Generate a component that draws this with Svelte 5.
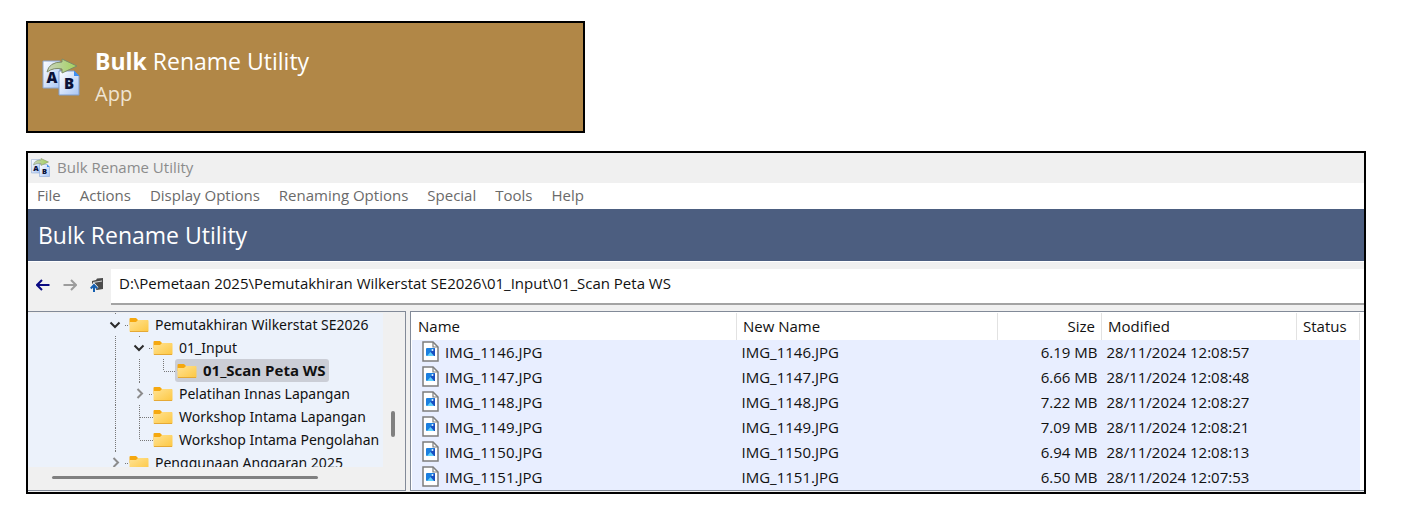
<script>
  const menus = ['File', 'Actions', 'Display Options', 'Renaming Options', 'Special', 'Tools', 'Help'];

  const tree = [
    { name: 'Pemutakhiran Wilkerstat SE2026', guides: [], node: 'open' },
    { name: '01_Input', guides: ['line'], node: 'open' },
    { name: '01_Scan Peta WS', guides: ['line', 'line'], node: 'end', selected: true },
    { name: 'Pelatihan Innas Lapangan', guides: ['line'], node: 'closed' },
    { name: 'Workshop Intama Lapangan', guides: ['line'], node: 'tee' },
    { name: 'Workshop Intama Pengolahan', guides: ['line'], node: 'end' },
    { name: 'Penggunaan Anggaran 2025', guides: [], node: 'closed' }
  ];

  const files = [
    { name: 'IMG_1146.JPG', size: '6.19 MB', modified: '28/11/2024 12:08:57' },
    { name: 'IMG_1147.JPG', size: '6.66 MB', modified: '28/11/2024 12:08:48' },
    { name: 'IMG_1148.JPG', size: '7.22 MB', modified: '28/11/2024 12:08:27' },
    { name: 'IMG_1149.JPG', size: '7.09 MB', modified: '28/11/2024 12:08:21' },
    { name: 'IMG_1150.JPG', size: '6.94 MB', modified: '28/11/2024 12:08:13' },
    { name: 'IMG_1151.JPG', size: '6.50 MB', modified: '28/11/2024 12:07:53' }
  ];

  let path = $state('D:\\Pemetaan 2025\\Pemutakhiran Wilkerstat SE2026\\01_Input\\01_Scan Peta WS');
</script>

{#snippet logo(size)}
  <svg class="logo" width={size} height={size} viewBox="0 0 38 38" aria-hidden="true">
    <defs>
      <linearGradient id="page{size}" x1="0" y1="0" x2="1" y2="1">
        <stop offset="0" stop-color="#ffffff" />
        <stop offset="1" stop-color="#a9c6f5" />
      </linearGradient>
      <linearGradient id="arrow{size}" x1="0" y1="0" x2="1" y2="0">
        <stop offset="0" stop-color="#c9d3c0" />
        <stop offset="1" stop-color="#a3d25a" />
      </linearGradient>
    </defs>
    <path d="M1 3H18V30H1Z" fill="url(#page{size})" stroke="#8aa5cf" />
    <path d="M17 13H32L37 18V37H17Z" fill="url(#page{size})" stroke="#7f9fd2" />
    <path d="M32 12.500V18H37.500Z" fill="#3f8ff0" />
    <text x="10" y="25" text-anchor="middle">A</text>
    <text x="27" y="31" text-anchor="middle">B</text>
    <path d="M5 14Q7 4 20 4V1L35 8L20 15V11Q12 9 5 14Z" fill="url(#arrow{size})" stroke="#7d8a66" />
  </svg>
{/snippet}

{#snippet folder()}
  <svg class="folder" width="20" height="16" viewBox="0 0 20 16" aria-hidden="true">
    <defs>
      <linearGradient id="fold" x1="0" y1="0" x2="1" y2="1">
        <stop offset="0" stop-color="#ffe394" />
        <stop offset="1" stop-color="#fdc741" />
      </linearGradient>
    </defs>
    <path d="M.5 2Q.5 1 1.500 1H7L9 3H19V8H.5Z" fill="#f5a80f" />
    <path d="M.5 5H7L9 3H18.500Q19.500 3 19.500 4V14Q19.500 15 18.500 15H1.500Q.5 15 .5 14Z" fill="url(#fold)" />
    <path d="M1 14.500H19" stroke="#e5a935" />
  </svg>
{/snippet}

{#snippet guide(kind)}
  <svg class="guide" width="24" height="23" viewBox="0 0 24 23" aria-hidden="true">
    {#if kind === 'line'}
      <path d="M12.500 0V23" />
    {:else if kind === 'tee'}
      <path d="M12.500 0V23M13 12.500H26" />
    {:else}
      <path d="M12.500 0V12M13 12.500H26" />
    {/if}
  </svg>
{/snippet}

<main>
  <a class="result" href="#app-window">
    {@render logo(38)}
    <span class="result-text">
      <span class="result-title"><b>Bulk</b> Rename Utility</span>
      <span class="result-kind">App</span>
    </span>
  </a>

  <section class="window" id="app-window" aria-label="Bulk Rename Utility">
    <header class="titlebar">
      {@render logo(19)}
      <span>Bulk Rename Utility</span>
    </header>

    <nav class="menubar">
      {#each menus as item}
        <button type="button">{item}</button>
      {/each}
    </nav>

    <h1>Bulk Rename Utility</h1>

    <div class="toolbar">
      <div class="nav-buttons">
        <button type="button" aria-label="Back">
          <svg width="14" height="14" viewBox="0 0 14 14"><path d="M1 7H13.500M6 2L1 7L6 12" fill="none" stroke="#0a0a82" stroke-width="2" /></svg>
        </button>
        <button type="button" aria-label="Forward">
          <svg width="14" height="14" viewBox="0 0 14 14"><path d="M.5 7H13M8 2L13 7L8 12" fill="none" stroke="#9c9c9c" stroke-width="2" /></svg>
        </button>
        <button type="button" aria-label="Up one folder">
          <svg width="14" height="14" viewBox="0 0 14 14">
            <path d="M2 3L6 2L7 .5L13 0V11L7 12H6V7L4 4.500L2 6Z" fill="#4b4b4b" />
            <path d="M3 4.500L12 3" stroke="#d8d8d8" />
            <path d="M4 14V8M.8 10.500L4 7L7.200 10.500" fill="none" stroke="#f0f0f0" stroke-width="3.500" />
            <path d="M4 14V8M.8 10.500L4 7L7.200 10.500" fill="none" stroke="#155fb0" stroke-width="2" />
          </svg>
        </button>
      </div>
      <input type="text" aria-label="Folder path" bind:value={path} />
    </div>

    <div class="panes">
      <div class="tree-pane">
        <ul role="tree" aria-label="Folders">
          {#each tree as row}
            <li role="treeitem" aria-selected={row.selected ?? false}>
              {#each row.guides as g}{@render guide(g)}{/each}
              {#if row.node === 'open' || row.node === 'closed'}
                <button class="toggle" type="button" aria-label="Toggle {row.name}">
                  <svg width="24" height="23" viewBox="0 0 24 23" aria-hidden="true">
                    <path class="dots" d="M12.500 0V2M22 12.500H26" />
                    {#if row.node === 'open'}
                      <path d="M7.500 9.500L12 14L16.500 9.500" fill="none" stroke="#2b2b2b" stroke-width="2" />
                    {:else}
                      <path d="M10.500 7L15 11.500L10.500 16" fill="none" stroke="#8c8c8c" stroke-width="2" />
                    {/if}
                  </svg>
                </button>
              {:else}
                {@render guide(row.node)}
              {/if}
              <span class="label" class:selected={row.selected}>
                {@render folder()}
                <span>{row.name}</span>
              </span>
            </li>
          {/each}
        </ul>
        <div class="vscroll"><span></span></div>
        <div class="hscroll"><span></span></div>
      </div>

      <div class="list-pane">
        <table>
          <colgroup>
            <col />
            <col class="c-new" />
            <col class="c-size" />
            <col class="c-modified" />
            <col class="c-status" />
          </colgroup>
          <thead>
            <tr>
              <th>Name</th>
              <th>New Name</th>
              <th class="num">Size</th>
              <th>Modified</th>
              <th>Status</th>
            </tr>
          </thead>
          <tbody>
            {#each files as file}
              <tr>
                <td>
                  <span class="file">
                    <svg width="17" height="21" viewBox="0 0 17 21" aria-hidden="true">
                      <path d="M1 1H11L16 6V20H1Z" fill="#fff" stroke="#7d7d7d" stroke-width="1.500" />
                      <path d="M11 1V6H16" fill="none" stroke="#7d7d7d" stroke-width="1.200" />
                      <rect x="4" y="7" width="9" height="8" rx="1" fill="#1b7fe0" />
                      <path d="M8 11L13 7V15H12Z" fill="#1a4fc0" />
                      <path d="M5 15L8.500 11L12 15Z" fill="#5fd0fa" />
                      <circle cx="10.500" cy="9" r="1" fill="#e4f5ff" />
                    </svg>
                    {file.name}
                  </span>
                </td>
                <td>{file.name}</td>
                <td class="num">{file.size}</td>
                <td>{file.modified}</td>
                <td></td>
              </tr>
            {/each}
          </tbody>
        </table>
      </div>
    </div>
  </section>
</main>

<style>
  :global(body) {
    margin: 0;
    background: #fff;
  }

  main {
    box-sizing: border-box;
    padding: 21px 46px 18px 26px;
    display: flex;
    flex-direction: column;
    gap: 18px;
    font-family: 'Open Sans', 'Noto Sans', sans-serif;
    font-size: 15px;
    line-height: 23px;
    color: #111;
  }

  button {
    padding: 0;
    border: 0;
    background: none;
    font: inherit;
    color: inherit;
  }

  svg {
    display: block;
    flex: none;
  }

  .logo text {
    font: 800 15px 'Open Sans', sans-serif;
    fill: #0a1238;
  }

  .result {
    box-sizing: border-box;
    width: 100%;
    max-width: 559px;
    padding: 20px 14px;
    display: flex;
    align-items: center;
    gap: 15px;
    border: 2px solid #000;
    background: #b18747;
    color: #fff;
    text-decoration: none;
  }

  .result-text {
    display: flex;
    flex-direction: column;
    padding-top: 2px;
  }

  .result-title {
    font-size: 23px;
    line-height: 32px;
  }

  .result-kind {
    font-size: 20px;
    line-height: 34px;
    color: #efe4d2;
  }

  .window {
    border: 2px solid #000;
    background: #f0f0f0;
  }

  .titlebar {
    box-sizing: border-box;
    display: flex;
    align-items: center;
    gap: 7px;
    height: 30px;
    padding: 0 3px 2px;
    color: #8c8c8c;
  }

  .menubar {
    display: flex;
    gap: 19px;
    padding: 1px 9px 2px;
    background: #fff;
    color: #6a6a6a;
  }

  h1 {
    margin: 0;
    padding: 0 10px;
    font-size: 23px;
    line-height: 52px;
    font-weight: 400;
    color: #fff;
    background: #4c5e80;
    border-bottom: 1px solid #fff;
  }

  .toolbar {
    display: flex;
    padding: 7px 0 6px;
  }

  .nav-buttons {
    display: flex;
    align-items: center;
    gap: 13px;
    padding: 0 7px 4px 8px;
  }

  .toolbar input {
    flex: 1;
    box-sizing: border-box;
    min-width: 0;
    height: 36px;
    padding: 0 8px 6px;
    border: 0;
    border-bottom: 2px solid #a3a3a3;
    outline: 0;
    background: #fff;
    font: inherit;
    color: #111;
  }

  .panes {
    display: grid;
    grid-template-columns: 378px minmax(0, 1fr);
    gap: 4px;
    padding-bottom: 1px;
  }

  .tree-pane {
    display: grid;
    grid-template-columns: minmax(0, 1fr) 22px;
    grid-template-rows: 154px 23px;
    border: 1px solid #828a98;
    border-left: 0;
    padding-top: 1px;
  }

  ul {
    margin: 0;
    padding: 0 0 0 75px;
    list-style: none;
    overflow: hidden;
    background: #ecf2fb;
    font-family: 'Noto Sans', sans-serif;
    font-size: 14px;
  }

  li {
    display: flex;
    height: 23px;
    white-space: nowrap;
  }

  .guide,
  .toggle svg {
    overflow: visible;
  }

  .guide path,
  .dots {
    fill: none;
    stroke: #777;
    stroke-dasharray: 1 1;
  }

  .label {
    display: flex;
    align-items: center;
    gap: 3px;
    padding: 0 3px 0 2px;
  }

  .label span {
    padding-left: 3px;
  }

  .selected {
    background: #cbced6;
    border-radius: 3px;
    font-size: 15px;
    font-family: 'Open Sans', sans-serif;
    font-weight: 700;
  }

  .vscroll {
    padding: 98px 8px 0;
  }

  .vscroll span {
    display: block;
    width: 4px;
    height: 26px;
    border-radius: 2px;
    background: #808080;
  }

  .hscroll {
    grid-column: 1 / -1;
    padding: 9px 87px 0 24px;
  }

  .hscroll span {
    display: block;
    height: 3px;
    border-radius: 2px;
    background: #808080;
  }

  .list-pane {
    overflow: hidden;
    border: 1px solid #828a98;
    border-right: 0;
    padding: 1px 4px 0 1px;
    background: #fff;
  }

  table {
    width: 100%;
    table-layout: fixed;
    border-collapse: collapse;
  }

  .c-new {
    width: 261px;
  }

  .c-size {
    width: 104px;
  }

  .c-modified {
    width: 195px;
  }

  .c-status {
    width: 63px;
  }

  th {
    height: 27px;
    padding: 0 6px;
    border-right: 1px solid #e2e2e2;
    font-weight: 400;
    text-align: left;
  }

  td {
    height: 25px;
    padding: 0 4px 0 5px;
    background: #e8eeff;
    white-space: nowrap;
  }

  .num {
    text-align: right;
  }

  .file {
    display: flex;
    align-items: center;
    gap: 6px;
    padding-left: 5px;
  }

  .file svg {
    padding-bottom: 3px;
  }
</style>
